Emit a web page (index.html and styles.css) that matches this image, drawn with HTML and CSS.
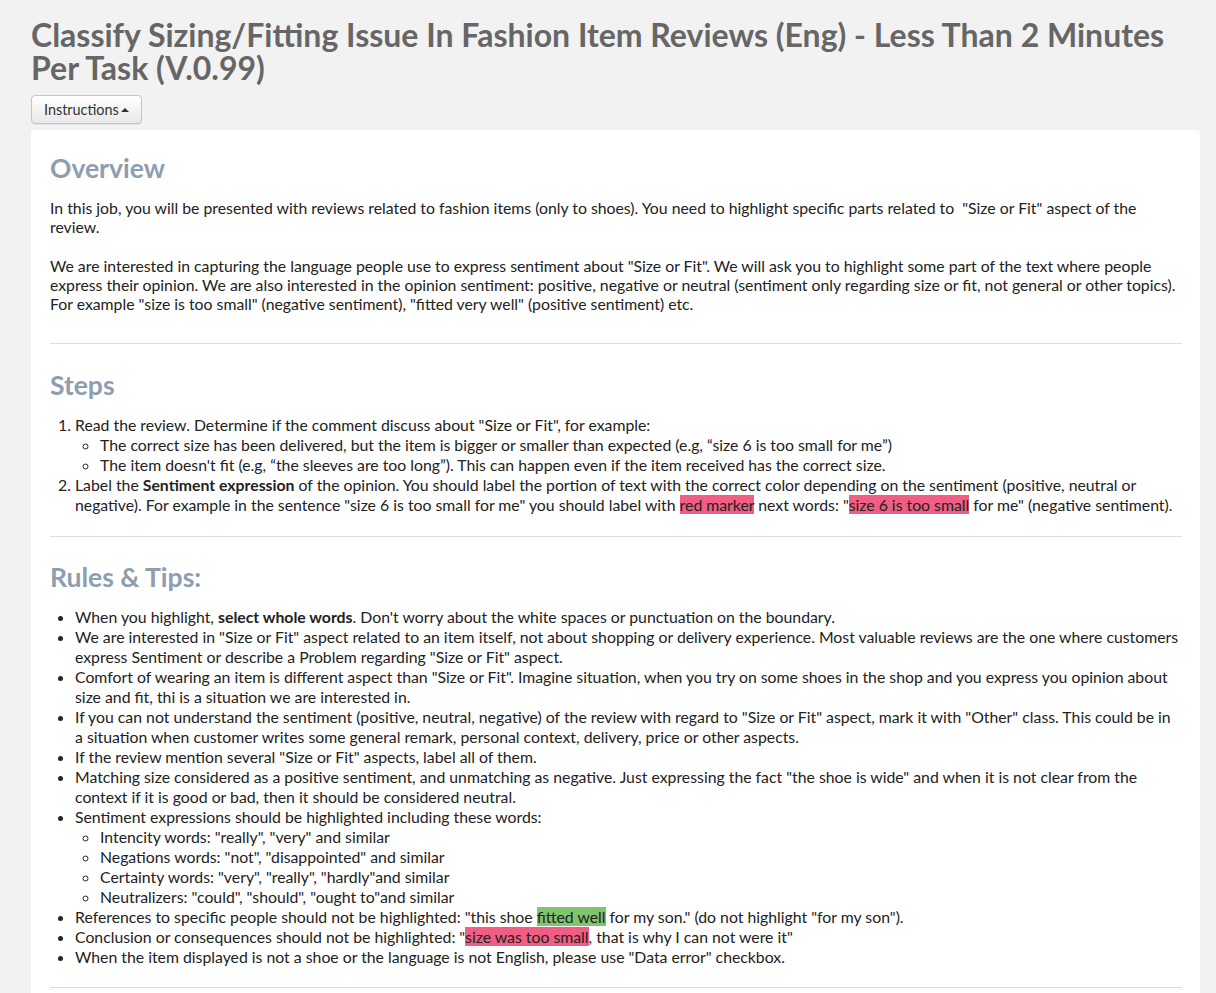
FILE: index.html
```html
<!DOCTYPE html>
<html lang="en">
<head>
<meta charset="utf-8">
<title>Classify Sizing/Fitting Issue</title>
<link rel="stylesheet" href="styles.css">
</head>
<body>
<div class="page">
  <h1 class="title">Classify Sizing/Fitting Issue In Fashion Item Reviews (Eng) - Less Than 2 Minutes Per Task (V.0.99)</h1>
  <button class="btn" type="button">Instructions<span class="caret"></span></button>
  <div class="panel">
    <h2 class="section-title">Overview</h2>
    <p class="para">In this job, you will be presented with reviews related to fashion items (only to shoes). You need to highlight specific parts related to &nbsp;"Size or Fit" aspect of the review.<br><br>We are interested in capturing the language people use to express sentiment about "Size or Fit". We will ask you to highlight some part of the text where people express their opinion. We are also interested in the opinion sentiment: positive, negative or neutral (sentiment only regarding size or fit, not general or other topics). For example "size is too small" (negative sentiment), "fitted very well" (positive sentiment) etc.</p>
    <hr class="rule rule-first">
    <h2 class="section-title">Steps</h2>
    <ol class="list steps">
      <li>Read the review. Determine if the comment discuss about "Size or Fit", for example:
        <ul class="sublist">
          <li>The correct size has been delivered, but the item is bigger or smaller than expected (e.g, “size 6 is too small for me”)</li>
          <li>The item doesn't fit (e.g, “the sleeves are too long”). This can happen even if the item received has the correct size.</li>
        </ul>
      </li>
      <li>Label the <b>Sentiment expression</b> of the opinion. You should label the portion of text with the correct color depending on the sentiment (positive, neutral or negative). For example in the sentence "size 6 is too small for me" you should label with <span class="neg">red marker</span> next words: "<span class="neg">size 6 is too small</span> for me" (negative sentiment).</li>
    </ol>
    <hr class="rule">
    <h2 class="section-title">Rules &amp; Tips:</h2>
    <ul class="list bullets">
      <li>When you highlight, <b>select whole words</b>. Don't worry about the white spaces or punctuation on the boundary.</li>
      <li>We are interested in "Size or Fit" aspect related to an item itself, not about shopping or delivery experience. Most valuable reviews are the one where customers express Sentiment or describe a Problem regarding "Size or Fit" aspect.</li>
      <li>Comfort of wearing an item is different aspect than "Size or Fit". Imagine situation, when you try on some shoes in the shop and you express you opinion about size and fit, thi is a situation we are interested in.</li>
      <li>If you can not understand the sentiment (positive, neutral, negative) of the review with regard to "Size or Fit" aspect, mark it with "Other" class. This could be in a situation when customer writes some general remark, personal context, delivery, price or other aspects.</li>
      <li>If the review mention several "Size or Fit" aspects, label all of them.</li>
      <li>Matching size considered as a positive sentiment, and unmatching as negative. Just expressing the fact "the shoe is wide" and when it is not clear from the context if it is good or bad, then it should be considered neutral.</li>
      <li>Sentiment expressions should be highlighted including these words:
        <ul class="sublist">
          <li>Intencity words: "really", "very" and similar</li>
          <li>Negations words: "not", "disappointed" and similar</li>
          <li>Certainty words: "very", "really", "hardly"and similar</li>
          <li>Neutralizers: "could", "should", "ought to"and similar</li>
        </ul>
      </li>
      <li>References to specific people should not be highlighted: "this shoe <span class="pos">fitted well</span> for my son." (do not highlight "for my son").</li>
      <li>Conclusion or consequences should not be highlighted: "<span class="neg">size was too small</span>, that is why I can not were it"</li>
      <li>When the item displayed is not a shoe or the language is not English, please use "Data error" checkbox.</li>
    </ul>
    <hr class="rule rule-last">
  </div>
</div>
</body>
</html>
```
FILE: styles.css
```css
html, body {
  margin: 0;
  padding: 0;
}
body {
  background: #f2f2f2;
  font-family: Lato, "Open Sans", "Liberation Sans", sans-serif;
  color: #222;
}
.page {
  width: 1169px;
  padding: 18px 0 0 31px;
}
.title {
  margin: 0;
  font-size: 32px;
  line-height: 33px;
  font-weight: 700;
  color: #666;
}
.btn {
  display: flex;
  align-items: center;
  margin-top: 11px;
  height: 29px;
  padding: 0 12px;
  font-family: Lato, "Open Sans", "Liberation Sans", sans-serif;
  font-size: 14.4px;
  color: #333;
  background: linear-gradient(#ffffff, #e8e8e8);
  border: 1px solid #c4c4c4;
  border-radius: 4px;
  box-shadow: 0 1px 1px rgba(0,0,0,0.06);
}
.caret {
  display: inline-block;
  width: 0;
  height: 0;
  margin-left: 2px;
  border-left: 4px solid transparent;
  border-right: 4px solid transparent;
  border-bottom: 4px solid #333;
}
.panel {
  margin-top: 6px;
  background: #fff;
  border-radius: 4px;
  padding: 23px 18px 20px 19px;
}
.section-title {
  margin: 0;
  font-size: 26.5px;
  line-height: 30px;
  font-weight: 700;
  color: #8d9eb1;
}
.para {
  margin: 15px 0 0;
  font-size: 15.8px;
  line-height: 19.2px;
}
.rule {
  border: 0;
  height: 1px;
  background: #dcdce0;
  margin: 21px 0 25px;
}
.rule-first {
  margin: 30px 0 26px;
}
.rule-last {
  margin-top: 20px;
}
.list {
  margin: 16px 0 0;
  padding-left: 25px;
  font-size: 15.8px;
  line-height: 20px;
}
.steps {
  margin-top: 15px;
}
.bullets {
  margin-top: 15px;
  list-style: disc;
}
.sublist {
  margin: 0;
  padding-left: 25px;
  list-style: circle;
}
.neg {
  background: #f25d83;
}
.pos {
  background: #7ec56e;
}
```
